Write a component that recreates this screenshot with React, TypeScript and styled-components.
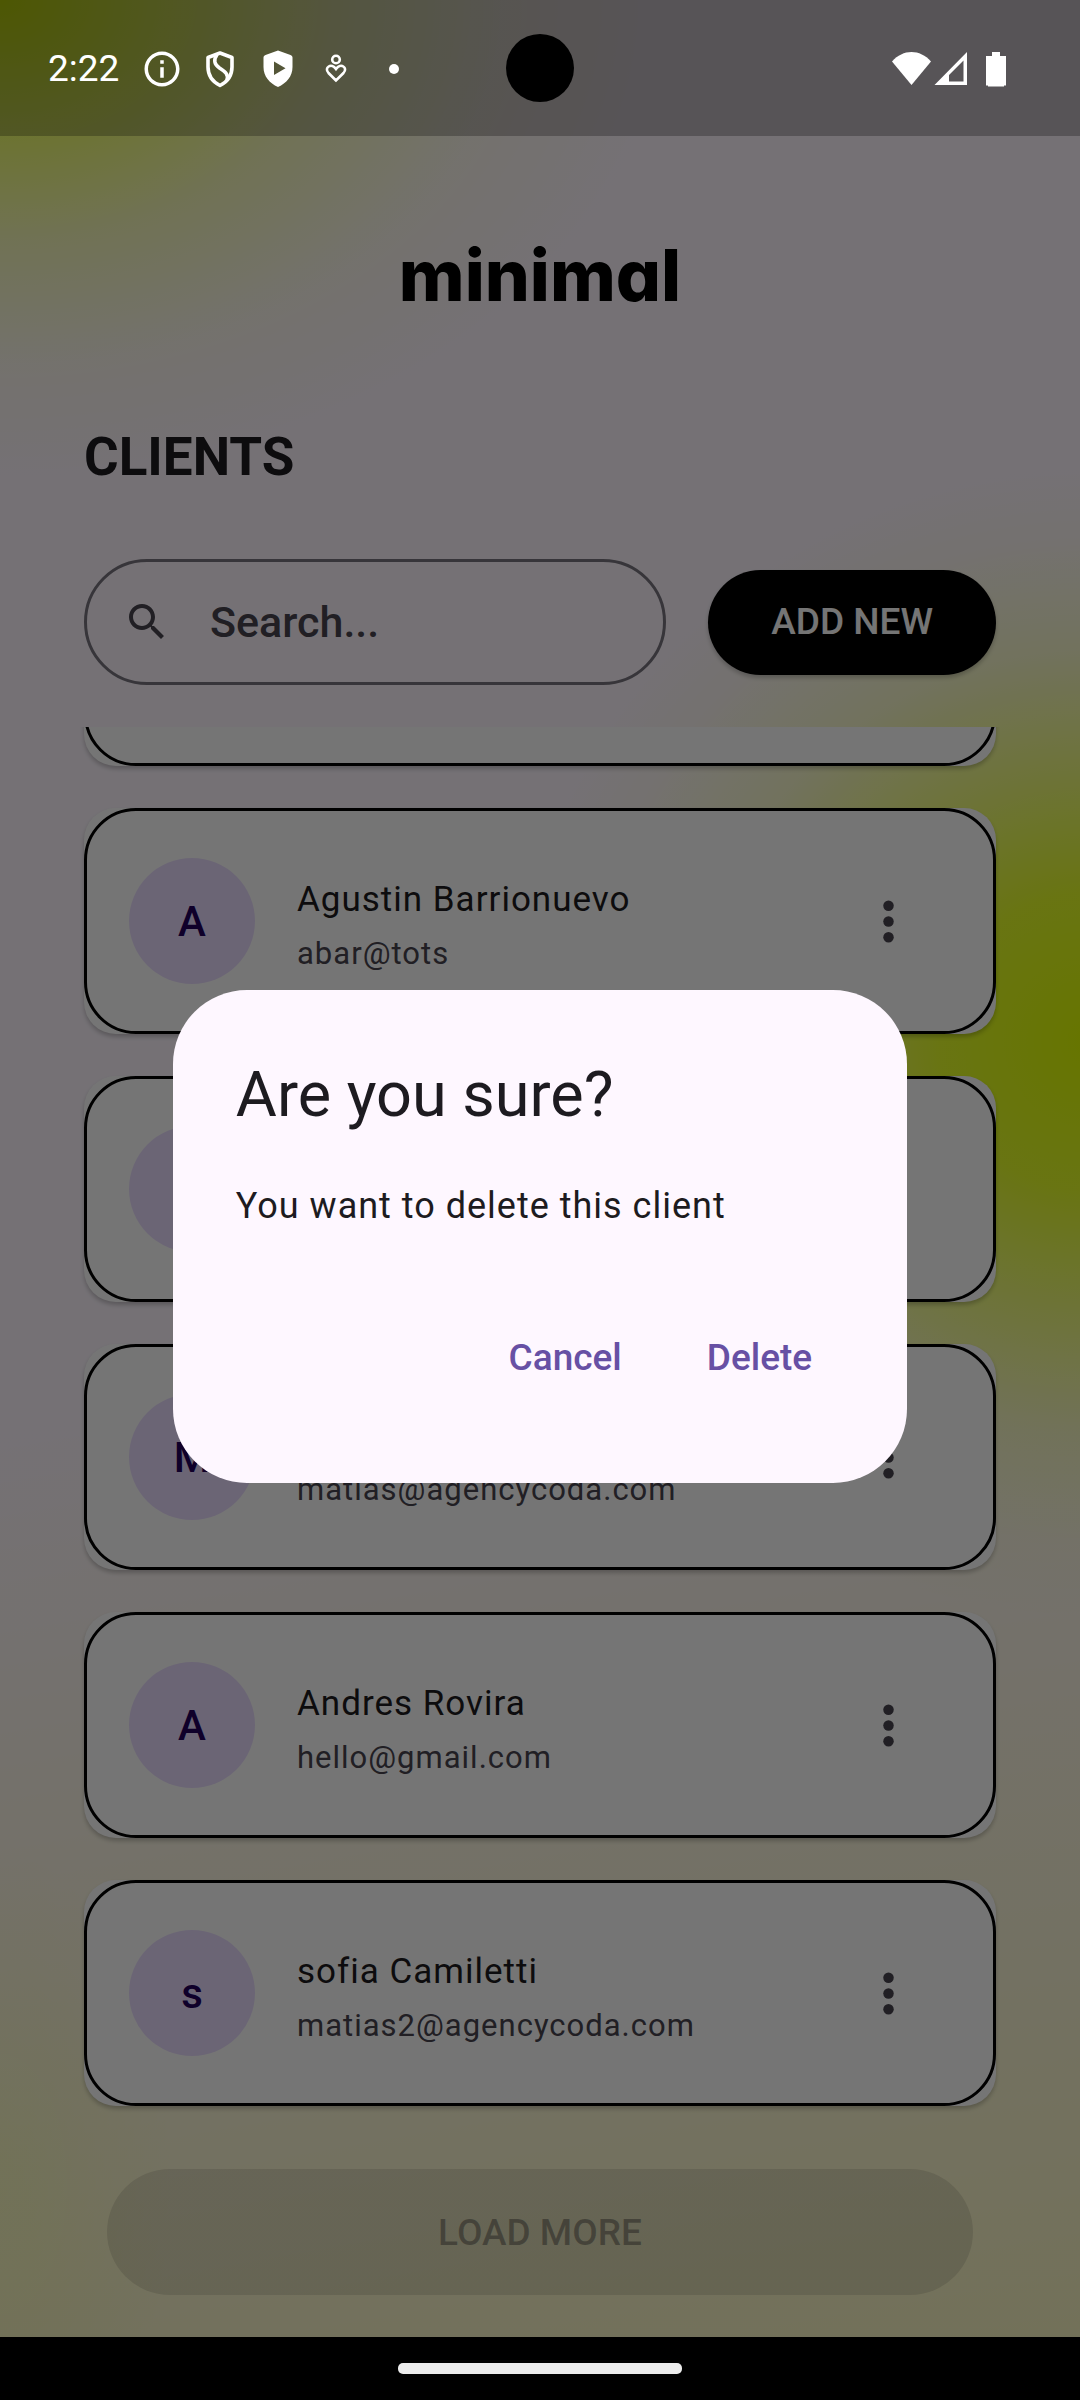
import React, { useLayoutEffect, useRef } from "react";
import styled, { createGlobalStyle } from "styled-components";

const GlobalStyle = createGlobalStyle`
  * { box-sizing: border-box; }
  body { margin: 0; }
  button, input { font-family: inherit; }
`;

const Screen = styled.div`
  position: relative;
  display: flex;
  flex-direction: column;
  height: 100vh;
  overflow: hidden;
  font-family: Roboto, "Liberation Sans", sans-serif;
  color: #1d1b20;
  background:
    radial-gradient(ellipse 62% 20% at 0% 0%, rgba(223, 255, 0, 0.96) 0%, rgba(223, 255, 0, 0.58) 28%, rgba(223, 255, 0, 0.28) 50%, rgba(223, 255, 0, 0.07) 76%, rgba(223, 255, 0, 0) 100%),
    radial-gradient(ellipse 54% 24% at 101% 43.4%, rgb(223, 255, 0) 0%, rgba(223, 255, 0, 0.84) 26%, rgba(223, 255, 0, 0.54) 45%, rgba(223, 255, 0, 0.2) 68%, rgba(223, 255, 0, 0.05) 87%, rgba(223, 255, 0, 0) 100%),
    radial-gradient(ellipse 16% 14% at 0% 91%, rgba(223, 255, 0, 0.1) 0%, rgba(223, 255, 0, 0) 100%),
    linear-gradient(170deg, rgba(235, 245, 0, 0) 55%, rgba(235, 245, 0, 0.12) 75%, rgba(235, 245, 0, 0.25) 100%),
    #fef7ff;
`;

const StatusBar = styled.header`
  position: relative;
  z-index: 2;
  flex: none;
  display: grid;
  grid-template-columns: 1fr auto 1fr;
  align-items: center;
  height: 136px;
  padding: 0 72px 0 48px;
  background: rgba(0, 0, 0, 0.25);
  color: #fff;
`;

const StatusGroup = styled.div<{ $end?: boolean }>`
  display: flex;
  align-items: center;
  justify-content: ${(p) => (p.$end ? "flex-end" : "flex-start")};
  gap: ${(p) => (p.$end ? "0" : "16px")};
  padding-top: 2px;
`;

const Clock = styled.time`
  font-size: 37px;
  line-height: 42px;
  margin-right: 6px;
`;

const Camera = styled.div`
  width: 68px;
  height: 68px;
  border-radius: 50%;
  background: #000;
  margin-left: 24px;
`;

const Header = styled.div`
  flex: none;
  display: flex;
  flex-direction: column;
  padding: 93px 84px 42px;
`;

const Logo = styled.div`
  align-self: center;
  font-family: Inter, sans-serif;
  font-weight: 800;
  font-size: 71px;
  line-height: 92px;
  font-feature-settings: "cv11" 1;
  color: #000;
`;

const Title = styled.h1`
  margin: 104px 0 0;
  font-size: 53px;
  line-height: 64px;
  font-weight: 700;
`;

const Toolbar = styled.div`
  display: flex;
  align-items: center;
  gap: 42px;
  margin-top: 70px;
`;

const SearchBox = styled.label`
  flex: 1;
  min-width: 0;
  display: flex;
  align-items: center;
  gap: 39px;
  height: 126px;
  padding: 0 36px;
  border: 3px solid #79747e;
  border-radius: 63px;
  color: #49454f;
`;

const SearchInput = styled.input`
  flex: 1;
  min-width: 0;
  padding: 0;
  border: 0;
  outline: 0;
  background: transparent;
  font-size: 43px;
  line-height: 60px;
  font-weight: 500;
  color: #1d1b20;
  &::placeholder { color: #49454f; opacity: 1; }
`;

const AddButton = styled.button`
  flex: none;
  height: 105px;
  padding: 0 63px;
  border: 0;
  border-radius: 53px;
  background: #000;
  color: #fff;
  font-size: 37px;
  line-height: 52px;
  font-weight: 500;
  box-shadow: 0 3px 4px rgba(0, 0, 0, 0.22);
`;

const ClientList = styled.ul`
  flex: 1 1 0;
  min-height: 0;
  margin: 0;
  padding: 0 84px 42px;
  list-style: none;
  display: flex;
  flex-direction: column;
  gap: 42px;
  overflow-y: auto;
  scrollbar-width: none;
`;

const Card = styled.li`
  flex: none;
  border-radius: 32px;
  background: #fff;
  box-shadow: 0 3px 4px rgba(0, 0, 0, 0.22);
`;

const CardBody = styled.div`
  display: flex;
  align-items: center;
  gap: 42px;
  padding: 47px 42px;
  border: 3px solid #000;
  border-radius: 52px;
`;

const Avatar = styled.div`
  flex: none;
  display: grid;
  place-items: center;
  width: 126px;
  height: 126px;
  border-radius: 50%;
  background: #eaddff;
  color: #21005d;
  font-size: 42px;
  font-weight: 500;
`;

const Details = styled.div`
  flex: 1;
  min-width: 0;
  padding-top: 12px;
`;

const Name = styled.div`
  font-size: 35px;
  line-height: 54px;
  letter-spacing: 1px;
`;

const Email = styled.div`
  font-size: 31px;
  line-height: 54px;
  letter-spacing: 1px;
  color: #49454f;
`;

const MenuButton = styled.button`
  flex: none;
  display: grid;
  place-items: center;
  width: 126px;
  height: 126px;
  padding: 0;
  border: 0;
  background: transparent;
  color: #49454f;
`;

const Footer = styled.div`
  flex: none;
  display: flex;
  padding: 21px 107px 42px;
`;

const LoadMore = styled.button`
  flex: 1;
  height: 126px;
  border: 0;
  border-radius: 63px;
  background: rgba(29, 27, 32, 0.12);
  color: rgba(29, 27, 32, 0.38);
  font-size: 37px;
  font-weight: 500;
`;

const NavBar = styled.footer`
  position: relative;
  z-index: 2;
  flex: none;
  display: grid;
  place-items: center;
  height: 63px;
  background: #000;
`;

const NavHandle = styled.div`
  width: 284px;
  height: 11px;
  border-radius: 5px;
  background: #ececec;
`;

const Scrim = styled.div`
  position: absolute;
  inset: 0;
  z-index: 1;
  display: grid;
  place-items: center;
  padding: 136px 0 63px;
  background: rgba(0, 0, 0, 0.54);
`;

const Dialog = styled.section`
  display: flex;
  flex-direction: column;
  width: 68%;
  padding: 63px;
  border-radius: 74px;
  background: #fef7ff;
`;

const DialogTitle = styled.h2`
  margin: 0;
  font-size: 63px;
  line-height: 84px;
  font-weight: 400;
`;

const DialogText = styled.p`
  margin: 43px 0 0;
  font-size: 36px;
  line-height: 52px;
  letter-spacing: 1px;
`;

const DialogActions = styled.div`
  display: flex;
  justify-content: flex-end;
  gap: 21px;
  margin-top: 62px;
`;

const TextButton = styled.button`
  height: 126px;
  padding: 0 32px;
  border: 0;
  background: transparent;
  color: #6750a4;
  font-size: 37px;
  font-weight: 500;
`;

const InfoIcon = () => (
  <svg width="42" height="42" viewBox="0 0 24 24" fill="currentColor" aria-hidden="true">
    <path d="M11 7h2v2h-2zm0 4h2v6h-2zm1-9C6.48 2 2 6.48 2 12s4.480 10 10 10 10-4.480 10-10S17.520 2 12 2zm0 18c-4.410 0-8-3.590-8-8s3.590-8 8-8 8 3.590 8 8-3.590 8-8 8z" />
  </svg>
);

const ShieldIcon = () => (
  <svg width="42" height="42" viewBox="0 0 42 42" fill="none" stroke="currentColor" strokeWidth="3.600" strokeLinejoin="round" aria-hidden="true">
    <path d="M21 5 33 9.500V19c0 9-5 15-12 18.500C14 34 9 28 9 19V9.500z" />
    <path d="M18 6.500c-4 6-2.500 10 2.500 13.500 6 4 9 6 7.500 12" />
  </svg>
);

const PlayShieldIcon = () => (
  <svg width="42" height="42" viewBox="0 0 42 42" fill="currentColor" aria-hidden="true">
    <path fillRule="evenodd" d="M21 2.500 33.500 7c1.200.5 2 1.200 2 2.500V19c0 9.500-6 16-14.500 20C12.500 35 6.500 28.500 6.500 19V9.500c0-1.300.8-2 2-2.500zM17 13.500v13.500l11.500-6.800z" />
  </svg>
);

const HeartPersonIcon = () => (
  <svg width="42" height="42" viewBox="0 0 42 42" fill="none" stroke="currentColor" strokeWidth="2.600" aria-hidden="true">
    <circle cx="21" cy="11.500" r="3.800" />
    <path d="M21 32.500 13.500 25c-5-5.500 3-10.500 7.500-4 4.500-6.500 12.500-1.500 7.500 4z" />
  </svg>
);

const DotIcon = () => (
  <svg width="42" height="42" viewBox="0 0 42 42" fill="currentColor" aria-hidden="true">
    <circle cx="21" cy="21" r="5" />
  </svg>
);

const SignalIcons = () => (
  <svg width="116" height="36" viewBox="0 0 116 36" fill="currentColor" aria-hidden="true">
    <path d="M0 10.500C11-2.200 28-2.200 39 10.500L19.500 34z" />
    <path fillRule="evenodd" d="M42.500 34 75 1v33zM57 30.500h14.500V9.500L57 24z" />
    <path d="M100 1h8v4h6v29.500h-2v1h-16v-1h-2V5h6z" />
  </svg>
);

const SearchIcon = () => (
  <svg width="48" height="48" viewBox="0 0 24 24" fill="currentColor" aria-hidden="true">
    <path d="M15.500 14h-.79l-.28-.27C15.410 12.590 16 11.110 16 9.500 16 5.910 13.090 3 9.500 3S3 5.910 3 9.500 5.910 16 9.500 16c1.610 0 3.090-.59 4.230-1.570l.27.28v.79l5 4.990L20.490 19l-4.990-5zm-6 0C7.010 14 5 11.990 5 9.500S7.010 5 9.500 5 14 7.010 14 9.500 11.990 14 9.500 14z" />
  </svg>
);

const MoreIcon = () => (
  <svg width="63" height="63" viewBox="0 0 24 24" fill="currentColor" aria-hidden="true">
    <circle cx="12" cy="6" r="2" />
    <circle cx="12" cy="12" r="2" />
    <circle cx="12" cy="18" r="2" />
  </svg>
);

type Client = { initial: string; name: string; email: string };

const clients: Client[] = [
  { initial: "", name: "", email: "" },
  { initial: "A", name: "Agustin Barrionuevo", email: "abar@tots" },
  { initial: "", name: "", email: "" },
  { initial: "M", name: "", email: "matias@agencycoda.com" },
  { initial: "A", name: "Andres Rovira", email: "hello@gmail.com" },
  { initial: "s", name: "sofia Camiletti", email: "matias2@agencycoda.com" },
];

const ClientCard = ({ client }: { client: Client }) => (
  <Card>
    <CardBody>
      <Avatar>{client.initial}</Avatar>
      <Details>
        <Name>{client.name || "\u00a0"}</Name>
        <Email>{client.email || "\u00a0"}</Email>
      </Details>
      <MenuButton type="button" aria-label="Client options">
        <MoreIcon />
      </MenuButton>
    </CardBody>
  </Card>
);

export default function App() {
  const listRef = useRef<HTMLUListElement>(null);

  useLayoutEffect(() => {
    if (listRef.current) listRef.current.scrollTop = listRef.current.scrollHeight;
  }, []);

  return (
    <Screen>
      <GlobalStyle />
      <StatusBar>
        <StatusGroup>
          <Clock>2:22</Clock>
          <InfoIcon />
          <ShieldIcon />
          <PlayShieldIcon />
          <HeartPersonIcon />
          <DotIcon />
        </StatusGroup>
        <Camera />
        <StatusGroup $end>
          <SignalIcons />
        </StatusGroup>
      </StatusBar>

      <Header>
        <Logo>minimal</Logo>
        <Title>CLIENTS</Title>
        <Toolbar>
          <SearchBox>
            <SearchIcon />
            <SearchInput type="text" placeholder="Search..." aria-label="Search" />
          </SearchBox>
          <AddButton type="button">ADD NEW</AddButton>
        </Toolbar>
      </Header>

      <ClientList ref={listRef}>
        {clients.map((client, i) => (
          <ClientCard key={i} client={client} />
        ))}
      </ClientList>

      <Footer>
        <LoadMore type="button" disabled>LOAD MORE</LoadMore>
      </Footer>

      <Scrim>
        <Dialog role="dialog" aria-modal="true" aria-labelledby="confirm-title">
          <DialogTitle id="confirm-title">Are you sure?</DialogTitle>
          <DialogText>You want to delete this client</DialogText>
          <DialogActions>
            <TextButton type="button">Cancel</TextButton>
            <TextButton type="button">Delete</TextButton>
          </DialogActions>
        </Dialog>
      </Scrim>

      <NavBar>
        <NavHandle />
      </NavBar>
    </Screen>
  );
}
